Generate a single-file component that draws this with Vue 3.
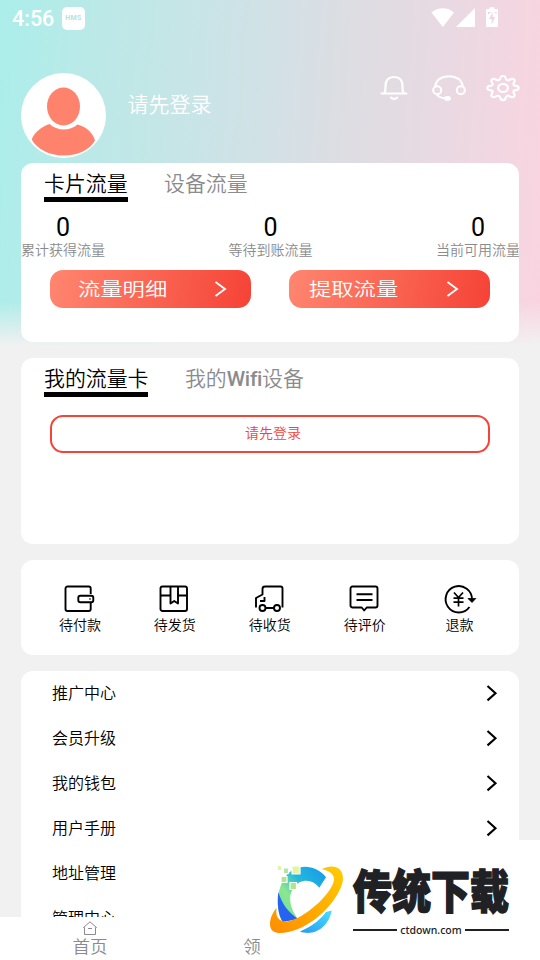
<script setup>
const stats = ['累计获得流量', '等待到账流量', '当前可用流量']
const orders = [
  { id: 'pay', label: '待付款' },
  { id: 'ship', label: '待发货' },
  { id: 'receive', label: '待收货' },
  { id: 'review', label: '待评价' },
  { id: 'refund', label: '退款' },
]
const menu = ['推广中心', '会员升级', '我的钱包', '用户手册', '地址管理', '管理中心']
</script>

<template>
  <div class="screen">
    <div class="backdrop"></div>
    <div class="content">
      <div class="status">
        <span class="clock">4:56</span>
        <span class="hms">HMS</span>
        <svg class="signals" width="67" height="22" viewBox="1 0 67 22" fill="#fff">
          <path d="M1.500 4.600C8-1.200 17.500-1.200 24 4.600L12.800 19Z" />
          <path d="M26 19L45 0v19Z" />
          <path fill-rule="evenodd" d="M59.500-.8h4.800V1H67a1 1 0 0 1 1 1v16a1 1 0 0 1-1 1H57a1 1 0 0 1-1-1V2a1 1 0 0 1 1-1h2.500ZM62.800 4L59 11h2.700v5.500L65.300 9h-2.500ZM58 4v2h1.500V4.700H61V4ZM64.500 4v.7h1V6H66.500V4Z" />
        </svg>
      </div>

      <header class="profile">
        <svg class="avatar" width="85" height="85" viewBox="0 0 85 85">
          <circle cx="42.500" cy="42.500" r="42.500" fill="#fff" />
          <ellipse cx="42.500" cy="33.500" rx="16.500" ry="19" fill="#ff826d" />
          <path d="M28.500 51C21 53.500 13.500 59 10.700 66.500 16 76 28 82.500 42.500 82.500S69 76.500 74 67.500C72 59.500 64.500 53.500 56.500 51.500 48.500 58.500 36 58 28.500 51Z" fill="#ff826d" />
        </svg>
        <span class="login-name">请先登录</span>
        <div class="tools">
          <svg width="28" height="27" viewBox="0 0 28 27" fill="none" stroke="#fff" stroke-width="2.200" stroke-linecap="round" stroke-linejoin="round">
            <path d="M1.500 18.500H26.500M4 18.300C6 16 5.500 14 5.500 11 5.500 5 8.500 2 14 2s8.500 3 8.500 9c0 3-.5 5 1.500 7.300M11 22.600c1.700 1.800 4.500 1.800 6.200 0" />
          </svg>
          <svg width="34" height="27" viewBox="0 0 34 27" fill="none" stroke="#fff" stroke-width="2.100" stroke-linecap="round">
            <path d="M3.300 11.500C3.800 5 9.500 1.200 17 1.200S30.200 5 30.700 11.500M4.500 19C6.500 22 10 23.300 14.500 23.400" />
            <ellipse cx="5.200" cy="15.200" rx="4" ry="3.900" />
            <ellipse cx="28.800" cy="15.200" rx="4" ry="3.900" />
            <ellipse cx="15.500" cy="23.400" rx="2.400" ry="1.300" fill="#fff" />
          </svg>
          <svg width="34" height="27" viewBox="0 .5 34 27" fill="none" stroke="#fff" stroke-width="2.200" stroke-linejoin="round">
            <path d="M14.300 3.800C14.800 .7 19.200 .7 19.700 3.800 20.200 6 22 6.300 24 5 27.200 3.300 29.800 5.300 28 8 26.700 10 27.500 11.200 29.700 11.300 33.700 11.600 33.700 15.400 29.700 15.700 27.500 15.800 26.700 17 28 19 29.800 21.700 27.200 23.700 24 22 22 20.700 20.200 21 19.700 23.200 19.200 26.300 14.800 26.300 14.300 23.200 13.800 21 12 20.700 10 22 6.800 23.700 4.200 21.700 6 19 7.300 17 6.500 15.800 4.300 15.700 .3 15.400 .3 11.600 4.300 11.300 6.500 11.200 7.300 10 6 8 4.200 5.300 6.800 3.300 10 5 12 6.300 13.800 6 14.300 3.800Z" />
            <ellipse cx="17" cy="13.500" rx="4.900" ry="4" />
          </svg>
        </div>
      </header>

      <section class="card traffic">
        <nav class="tabs">
          <span class="tab active">卡片流量</span>
          <span class="tab">设备流量</span>
        </nav>
        <div class="stats">
          <div v-for="s in stats" :key="s" class="stat">
            <b>0</b>
            <span>{{ s }}</span>
          </div>
        </div>
        <div class="actions">
          <div class="action detail">
            <span>流量明细</span>
            <svg width="14" height="18" viewBox="0 0 14 18" fill="none" stroke="#fff" stroke-width="1.900"><path d="M2.500 1.900L12 9 2.500 16.100" /></svg>
          </div>
          <div class="action withdraw">
            <span>提取流量</span>
            <svg width="14" height="18" viewBox="0 0 14 18" fill="none" stroke="#fff" stroke-width="1.900"><path d="M2.500 1.900L12 9 2.500 16.100" /></svg>
          </div>
        </div>
      </section>

      <section class="card devices">
        <nav class="tabs">
          <span class="tab active">我的流量卡</span>
          <span class="tab">我的<i>Wifi</i>设备</span>
        </nav>
        <div class="login-button">请先登录</div>
      </section>

      <section class="card orders">
        <div v-for="o in orders" :key="o.id" class="order">
          <svg width="32" height="30" viewBox="0 0 32 30" fill="none" stroke="#000" stroke-width="1.900" stroke-linejoin="round">
            <template v-if="o.id === 'pay'">
              <path d="M26.700 11V5.500a2 2 0 0 0-2-2H3.500a2 2 0 0 0-2 2v20.500a2 2 0 0 0 2 2H24.700a2 2 0 0 0 2-2V19.500" />
              <rect x="14.300" y="12.800" width="15" height="6.500" rx="2" />
              <circle cx="26" cy="16" r=".4" stroke-width="1" />
            </template>
            <template v-else-if="o.id === 'ship'">
              <rect x="1.500" y="3.500" width="26.500" height="24.500" rx="2" />
              <path d="M1.500 12.500H11.500M19 12.500H28M11.500 3.500V20.500L15.200 18 19 20.500V3.500" />
            </template>
            <template v-else-if="o.id === 'receive'">
              <path d="M2 24.500V15L8.500 11.500V6a2.500 2.500 0 0 1 2.500-2.500H26.500a2 2 0 0 1 2 2V24.500M11.500 25H20M6 18H10.500V14" />
              <circle cx="8.500" cy="25" r="3" />
              <circle cx="23" cy="25" r="3" />
            </template>
            <template v-else-if="o.id === 'review'">
              <path d="M3.500 3.500H26.500a2 2 0 0 1 2 2V22.500a2 2 0 0 1-2 2H17.700L15.200 27.500 12.700 24.500H3.500a2 2 0 0 1-2-2V5.500a2 2 0 0 1 2-2Z" />
              <path d="M7.500 11.300H23.500M7.500 17H23.500" />
            </template>
            <template v-else>
              <path d="M25.500 24A13.200 13.200 0 1 1 28 16.500" />
              <path d="M24 15.500H31.800L28 19.500Z" fill="#000" stroke-width=".8" />
              <path d="M10 9.500L14.500 14.500 19 9.500M14.500 14.500V23.500M9.500 15.200H19.500M9.500 19.200H19.500" stroke-width="1.700" />
            </template>
          </svg>
          <span>{{ o.label }}</span>
        </div>
      </section>

      <section class="card menu">
        <div v-for="m in menu" :key="m" class="menu-row">
          <span>{{ m }}</span>
          <svg width="12" height="18" viewBox="0 0 12 18" fill="none" stroke="#000" stroke-width="2.100"><path d="M1.500 2L9.500 9.200 1.500 16.400" /></svg>
        </div>
      </section>
    </div>

    <footer class="tabbar">
      <div class="tabbar-item">
        <svg width="16" height="14" viewBox="0 0 16 14" fill="none" stroke="#8c8c8e" stroke-width="1"><path d="M1.500 6.500L8 .8 14.500 6.500H13.500V13.500H2.500V6.500ZM6 7.500h4" /></svg>
        <span>首页</span>
      </div>
      <div class="tabbar-item">
        <span>领</span>
      </div>
    </footer>

    <div class="brand">
      <svg class="brand-mark" width="78" height="74" viewBox="0 0 78 74">
        <defs>
          <linearGradient id="arc" x1="1" y1="0" x2="0" y2="1"><stop offset="0" stop-color="#1597e9" /><stop offset=".4" stop-color="#23b9dc" /><stop offset=".65" stop-color="#8ce78e" /><stop offset="1" stop-color="#65d9a5" /></linearGradient>
          <linearGradient id="ring" x1="1" y1="0" x2="0" y2="1"><stop offset="0" stop-color="#ffcc00" /><stop offset="1" stop-color="#ff8c00" /></linearGradient>
          <linearGradient id="tail" x1="0" y1="1" x2="1" y2="0"><stop offset="0" stop-color="#2998f2" /><stop offset="1" stop-color="#46e0ff" /></linearGradient>
        </defs>
        <path d="M59 12.300C49-1 29-2 19 11 10 22 8 44 15 56L31 54C20 40 21 24 32 17.500 40 14 47 16 52.300 22.700Z" fill="url(#arc)" />
        <path d="M11.300 27C10 38 11 50 16 57L31 54C21 47 15 39 11.300 27Z" fill="#2563f0" />
        <path d="M33 66.500C46 61 55 53 59 47L64.700 45.500C62 61 48 72 33 66.500Z" fill="url(#tail)" />
        <path d="M54.700 4.300C65-1 76 1 76 14 75 28 56 54 31 64 15 70 3 70 3 59 3 53 6 47 9.700 43 8 52 12 57 20 56.500 37 54 65 29 67 15 67.500 9 62 5.500 54.700 4.300Z" fill="url(#ring)" />
        <g stroke="#fff" stroke-width="1.200"><path d="M14 11.500h6v6h-6ZM23 17.500h6.500v7H23Z" fill="#ace88b" /><path d="M25 1h8v8h-8Z" fill="#e4f4a0" /><path d="M16.500 3h5v5.500h-5Z" fill="#afe5a0" /></g>
        <path d="M10.700 1.200h3.500V5h-3.500Z" fill="#e4f4a0" />
      </svg>
      <div class="brand-copy">
        <span class="brand-name">传统下载</span>
        <span class="brand-domain">ctdown.com</span>
      </div>
    </div>
  </div>
</template>

<style>
body { margin: 0; overflow: hidden; }
</style>

<style scoped>
.screen { position: relative; width: 540px; height: 960px; overflow: hidden; background: #f1f1f1; font-family: Roboto, "Noto Sans CJK SC", sans-serif; font-weight: 350; color: #000; box-sizing: border-box; display: flex; flex-direction: column; }
.screen * { box-sizing: border-box; }
.backdrop { position: absolute; inset: 0 0 auto; height: 350px; background: linear-gradient(to bottom, transparent 302px, #f1f1f1 346px), linear-gradient(94deg, #abeeea 0%, #bde8e7 20%, #d2e1e6 49%, #dddde2 63%, #ead9e2 81%, #fad4e0 100%); }
.content { position: relative; height: 917px; overflow: hidden; }
.status { height: 73px; padding: 7px 42px 0 12px; display: flex; align-items: flex-start; color: #fff; }
.clock { font-size: 21.500px; font-weight: 500; line-height: 24px; width: 50px; }
.hms { width: 23px; height: 23px; border-radius: 5px; background: #fff; color: #b5e2e2; font-size: 7px; line-height: 23px; text-align: center; font-weight: 700; letter-spacing: .3px; }
.signals { margin: 1px 0 0 auto; overflow: visible; }
.profile { height: 90px; padding: 0 20px 0 21px; display: flex; align-items: flex-start; color: #fff; }
.login-name { font-size: 21px; line-height: 30px; margin: 17px 0 0 21.500px; }
.tools { display: flex; gap: 23px; margin: 2px 0 0 auto; }
.tools svg:nth-child(2) { margin-left: 1px; }
.tools svg:nth-child(3) { margin-left: -3px; }
.card { width: 498px; margin: 0 21px 16px; background: #fff; border-radius: 12px; overflow: hidden; }
.traffic { height: 179px; }
.tabs { display: flex; gap: 36.500px; padding: 6px 23px 0; height: 50px; }
.tab { height: 33px; line-height: 31px; font-size: 20.900px; color: #8b8b8d; white-space: nowrap; }
.tab.active { color: #000; border-bottom: 5px solid #000; }
.tab i { font-style: normal; font-weight: 500; letter-spacing: -.3px; }
.stats { display: flex; justify-content: space-between; height: 57px; margin-right: -1px; }
.stat { width: 84px; display: flex; flex-direction: column; align-items: center; white-space: nowrap; }
.stat b { font-size: 25px; font-weight: 400; line-height: 30px; }
.stat span { color: #8b8b8d; font-size: 14px; line-height: 18px; margin-top: -2px; }
.actions { display: flex; gap: 38px; padding-left: 29px; }
.action { width: 201px; height: 38px; border-radius: 13px; background: linear-gradient(100deg, #ff866f, #f54336); display: flex; align-items: center; justify-content: space-between; padding: 0 24px 0 28px; color: #fff; }
.action span { font-size: 18.500px; transform: scaleX(1.205); transform-origin: left; line-height: 36px; padding-top: 2px; }
.withdraw { padding: 0 31px 0 20px; }
.devices { height: 186px; }
.login-button { height: 38px; margin: 7px 29px 0; border: 2px solid #f54336; border-radius: 13px; color: #f54336; font-size: 14px; line-height: 32px; text-align: center; padding-left: 6px; }
.orders { height: 95px; display: flex; padding: 23px 12px 0 11.500px; }
.order { flex: 1; display: flex; flex-direction: column; align-items: center; font-size: 14px; }
.order svg { overflow: visible; flex: none; }
.order span { line-height: 20px; margin-top: 2px; }
.menu { height: 280px; }
.menu-row { height: 45px; padding: 0 21px 0 31px; display: flex; align-items: center; justify-content: space-between; }
.menu-row span { font-size: 16px; line-height: 24px; }
.menu-row svg { margin-bottom: 1px; }
.tabbar { position: relative; height: 43px; background: #fff; display: flex; color: #8b8b8d; font-size: 17.500px; }
.tabbar-item { width: 180px; height: 43px; display: flex; flex-direction: column; align-items: center; justify-content: flex-end; }
.tabbar-item:last-child { padding-right: 36px; }
.tabbar-item svg { margin-bottom: -1px; }
.tabbar-item span { line-height: 26px; }
.brand { position: absolute; right: 0; bottom: 0; width: 279px; height: 120px; background: #fff; display: flex; padding: 25px 0 0 6px; }
.brand-mark { flex: none; }
.brand-copy { width: 156px; margin-left: 8px; display: flex; flex-direction: column; }
.brand-name { height: 56px; color: #202124; font-family: "Noto Sans CJK SC", sans-serif; font-weight: 900; font-size: 39px; line-height: 48px; white-space: nowrap; transform: scaleY(1.180); -webkit-text-stroke: 1.200px #202124; }
.brand-domain { display: flex; align-items: center; gap: 3px; font-family: "Noto Sans", sans-serif; font-weight: 500; font-size: 10.500px; line-height: 18px; color: #202124; }
.brand-domain::before, .brand-domain::after { content: ""; flex: 1; height: 2px; background: #202124; }
</style>
